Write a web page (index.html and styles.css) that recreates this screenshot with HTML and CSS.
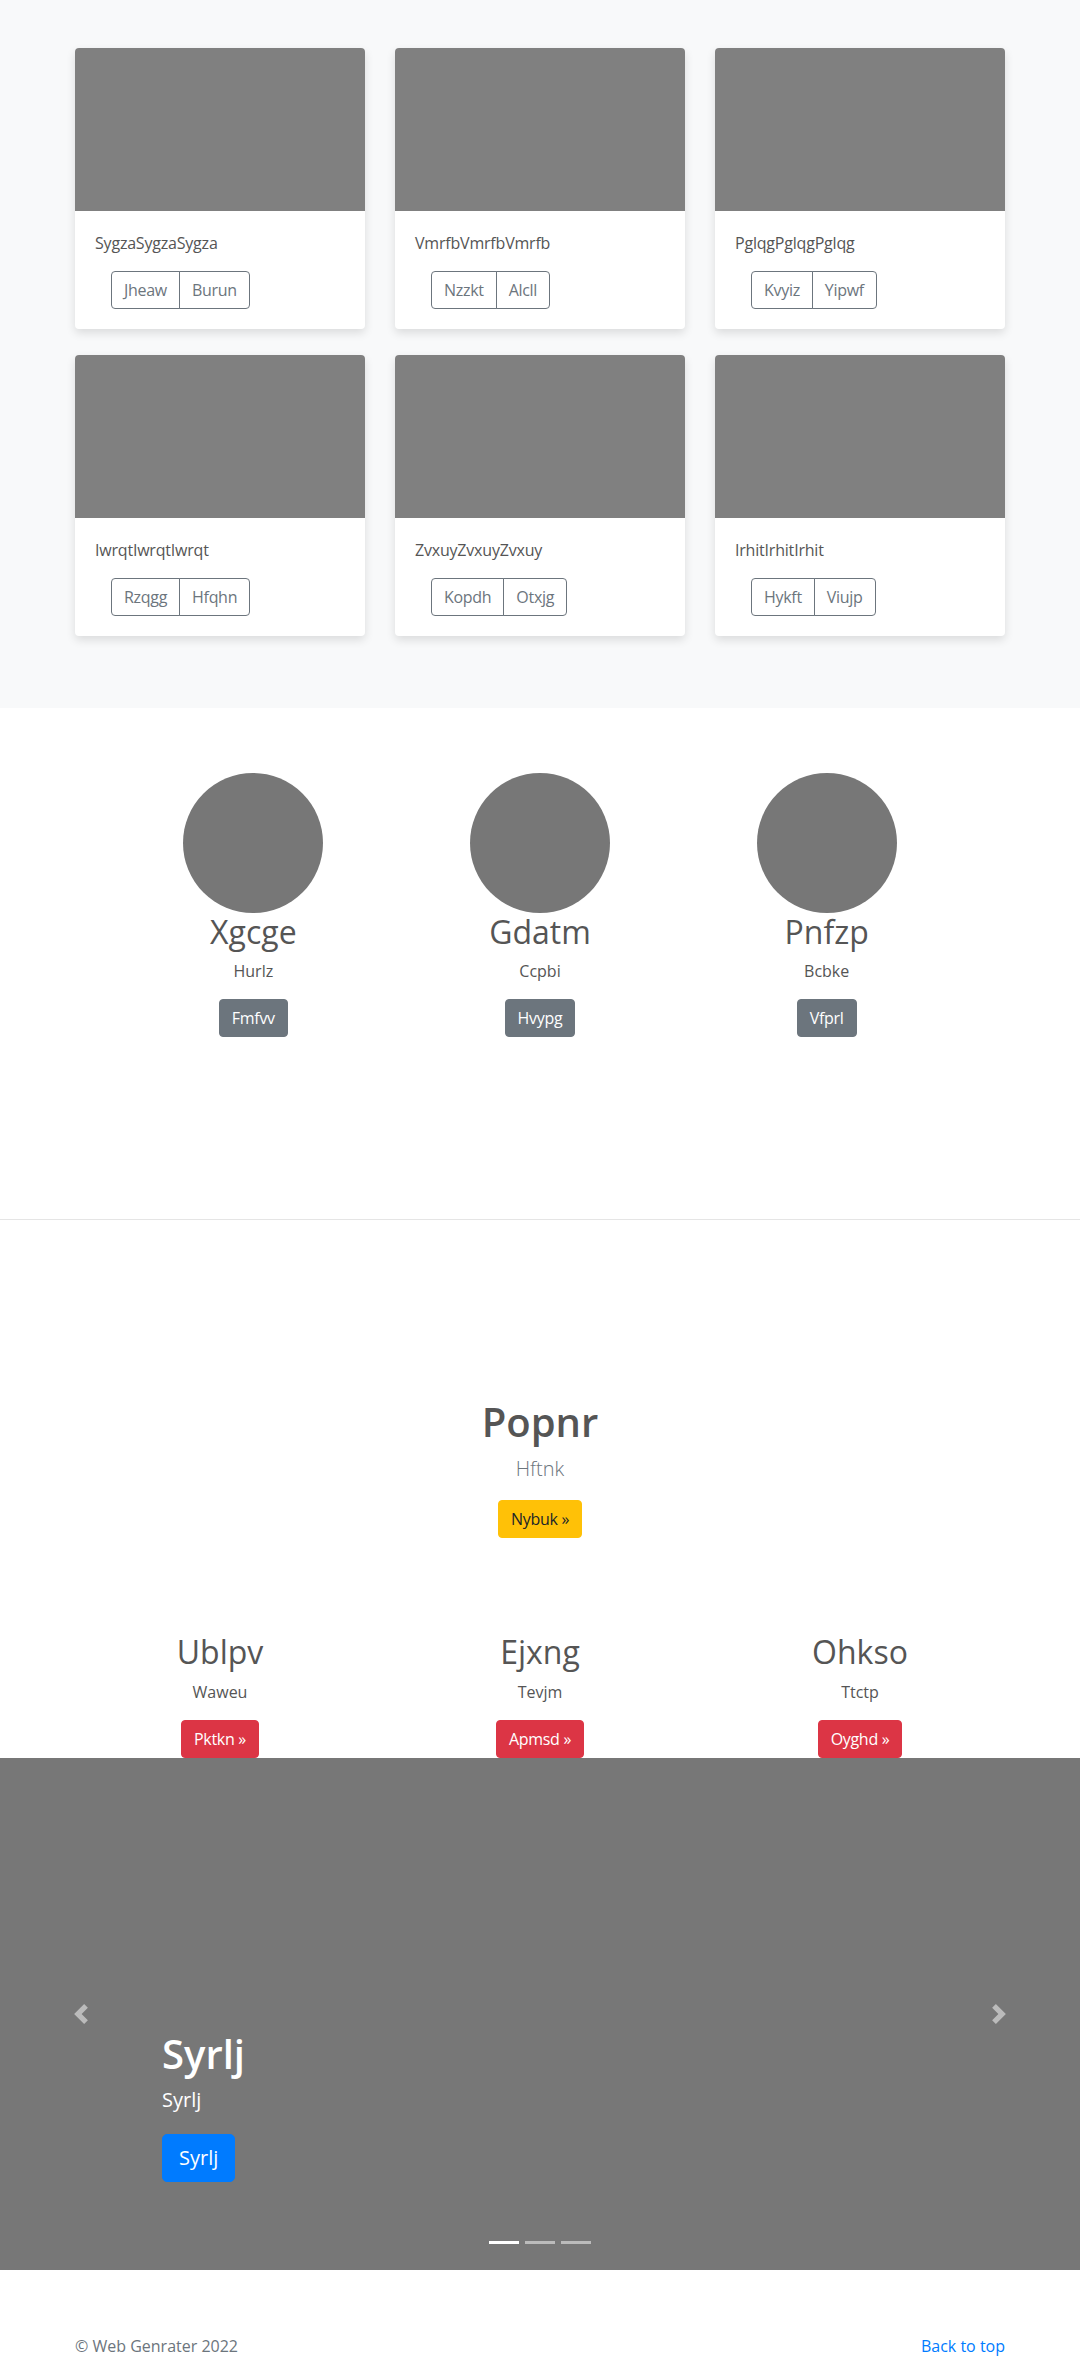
FILE: index.html
```html
<!DOCTYPE html>
<html lang="en">
<head>
<meta charset="utf-8">
<title>Web Genrater</title>
<link rel="stylesheet" href="styles.css">
</head>
<body>
<section class="album">
  <div class="container card-grid">
    <div class="card">
      <div class="card-img"></div>
      <div class="card-body">
        <p class="card-text">SygzaSygzaSygza</p>
        <div class="btn-group"><button class="btn btn-outline">Jheaw</button><button class="btn btn-outline">Burun</button></div>
      </div>
    </div>
    <div class="card">
      <div class="card-img"></div>
      <div class="card-body">
        <p class="card-text">VmrfbVmrfbVmrfb</p>
        <div class="btn-group"><button class="btn btn-outline">Nzzkt</button><button class="btn btn-outline">Alcll</button></div>
      </div>
    </div>
    <div class="card">
      <div class="card-img"></div>
      <div class="card-body">
        <p class="card-text">PglqgPglqgPglqg</p>
        <div class="btn-group"><button class="btn btn-outline">Kvyiz</button><button class="btn btn-outline">Yipwf</button></div>
      </div>
    </div>
    <div class="card">
      <div class="card-img"></div>
      <div class="card-body">
        <p class="card-text">IwrqtIwrqtIwrqt</p>
        <div class="btn-group"><button class="btn btn-outline">Rzqgg</button><button class="btn btn-outline">Hfqhn</button></div>
      </div>
    </div>
    <div class="card">
      <div class="card-img"></div>
      <div class="card-body">
        <p class="card-text">ZvxuyZvxuyZvxuy</p>
        <div class="btn-group"><button class="btn btn-outline">Kopdh</button><button class="btn btn-outline">Otxjg</button></div>
      </div>
    </div>
    <div class="card">
      <div class="card-img"></div>
      <div class="card-body">
        <p class="card-text">IrhitIrhitIrhit</p>
        <div class="btn-group"><button class="btn btn-outline">Hykft</button><button class="btn btn-outline">Viujp</button></div>
      </div>
    </div>
  </div>
</section>

<section class="marketing">
  <div class="marketing-grid">
    <div class="person">
      <div class="avatar"></div>
      <h2 class="person-name">Xgcge</h2>
      <p class="person-role">Hurlz</p>
      <button class="btn btn-secondary">Fmfvv</button>
    </div>
    <div class="person">
      <div class="avatar"></div>
      <h2 class="person-name">Gdatm</h2>
      <p class="person-role">Ccpbi</p>
      <button class="btn btn-secondary">Hvypg</button>
    </div>
    <div class="person">
      <div class="avatar"></div>
      <h2 class="person-name">Pnfzp</h2>
      <p class="person-role">Bcbke</p>
      <button class="btn btn-secondary">Vfprl</button>
    </div>
  </div>
</section>

<hr class="divider">

<section class="hero">
  <h1 class="hero-title">Popnr</h1>
  <p class="hero-lead">Hftnk</p>
  <button class="btn btn-warning">Nybuk »</button>
</section>

<section class="features container">
  <div class="feature">
    <h2 class="feature-title">Ublpv</h2>
    <p class="feature-text">Waweu</p>
    <button class="btn btn-danger">Pktkn »</button>
  </div>
  <div class="feature">
    <h2 class="feature-title">Ejxng</h2>
    <p class="feature-text">Tevjm</p>
    <button class="btn btn-danger">Apmsd »</button>
  </div>
  <div class="feature">
    <h2 class="feature-title">Ohkso</h2>
    <p class="feature-text">Ttctp</p>
    <button class="btn btn-danger">Oyghd »</button>
  </div>
</section>

<section class="carousel">
  <ol class="indicators">
    <li class="indicator active"></li>
    <li class="indicator"></li>
    <li class="indicator"></li>
  </ol>
  <a class="control control-prev" href="#">
    <svg class="control-icon" viewBox="0 0 8 8" width="20" height="20"><path fill="#fff" d="M5.25 0l-4 4 4 4 1.5-1.5L4.25 4l2.5-2.5L5.25 0z"/></svg>
  </a>
  <a class="control control-next" href="#">
    <svg class="control-icon" viewBox="0 0 8 8" width="20" height="20"><path fill="#fff" d="M2.75 0l-1.5 1.5L3.75 4l-2.5 2.5L2.75 8l4-4-4-4z"/></svg>
  </a>
  <div class="caption">
    <h1 class="caption-title">Syrlj</h1>
    <p class="caption-text">Syrlj</p>
    <div class="caption-action"><button class="btn btn-lg btn-primary">Syrlj</button></div>
  </div>
</section>

<footer class="footer container">
  <p class="copyright">© Web Genrater 2022</p>
  <a class="back-top" href="#">Back to top</a>
</footer>
</body>
</html>
```

FILE: styles.css
```css
* { box-sizing: border-box; }

body {
  margin: 0;
  font-family: "Open Sans", "Noto Sans", sans-serif;
  font-size: 16px;
  line-height: 1.5;
  color: #555;
  background: #fff;
}

p { margin: 0; }
h1, h2 { margin: 0; }

.container {
  width: 930px;
  margin: 0 auto;
}

/* Buttons */
.btn {
  display: inline-block;
  font-family: inherit;
  font-size: 16px;
  line-height: 24px;
  letter-spacing: -0.3px;
  padding: 6px 12px;
  border: 1px solid transparent;
  border-radius: 4px;
  background: transparent;
  cursor: pointer;
}
.btn-outline {
  color: #6c757d;
  border-color: #6c757d;
  background: transparent;
}
.btn-secondary { background: #6c757d; border-color: #6c757d; color: #fff; }
.btn-warning { background: #ffc107; border-color: #ffc107; color: #212529; }
.btn-danger { background: #dc3545; border-color: #dc3545; color: #fff; }
.btn-primary { background: #007bff; border-color: #007bff; color: #fff; }
.btn-lg {
  font-size: 20px;
  line-height: 30px;
  padding: 8px 16px;
  border-radius: 5px;
}

/* Album */
.album {
  background: #f8f9fa;
  padding: 48px 0 72px;
}
.card-grid {
  display: grid;
  grid-template-columns: repeat(3, 1fr);
  column-gap: 30px;
  row-gap: 26px;
}
.card {
  background: #fff;
  border-radius: 4px;
  box-shadow: 0 4px 10px rgba(0, 0, 0, 0.12);
  overflow: hidden;
}
.card-img {
  height: 163px;
  background: #808080;
}
.card-body {
  padding: 20px;
}
.card-text {
  margin-bottom: 16px;
  letter-spacing: -0.2px;
}
.btn-group {
  display: inline-flex;
  margin-left: 16px;
}
.btn-group .btn:first-child {
  border-top-right-radius: 0;
  border-bottom-right-radius: 0;
}
.btn-group .btn:last-child {
  border-top-left-radius: 0;
  border-bottom-left-radius: 0;
  margin-left: -1px;
}

/* Marketing */
.marketing {
  padding: 65px 0 182px;
}
.marketing-grid {
  width: 860px;
  margin: 0 auto;
  display: grid;
  grid-template-columns: repeat(3, 1fr);
}
.person {
  text-align: center;
}
.avatar {
  width: 140px;
  height: 140px;
  border-radius: 50%;
  background: #777;
  margin: 0 auto;
}
.person-name {
  font-size: 32px;
  font-weight: 400;
  line-height: 1.2;
  margin-bottom: 8px;
}
.person-role {
  margin-bottom: 16px;
}

.divider {
  margin: 0;
  border: 0;
  border-top: 1px solid rgba(0, 0, 0, 0.1);
}

/* Hero */
.hero {
  text-align: center;
  padding-top: 178px;
}
.hero-title {
  font-size: 40px;
  font-weight: 600;
  line-height: 1.2;
  margin-bottom: 8px;
}
.hero-lead {
  font-size: 20px;
  font-weight: 300;
  line-height: 30px;
  color: #6c757d;
  margin-bottom: 16px;
}

/* Features */
.features {
  display: grid;
  grid-template-columns: repeat(3, 1fr);
  column-gap: 30px;
  padding-top: 95px;
}
.feature {
  text-align: center;
}
.feature-title {
  font-size: 32px;
  font-weight: 500;
  line-height: 1.2;
  margin-bottom: 8px;
}
.feature-text {
  margin-bottom: 16px;
}
.feature .btn { vertical-align: top; }

/* Carousel */
.carousel {
  position: relative;
  height: 512px;
  background: #777;
  overflow: hidden;
}
.indicators {
  position: absolute;
  left: 0;
  right: 0;
  bottom: 0;
  margin: 0 0 16px;
  padding: 0;
  list-style: none;
  display: flex;
  justify-content: center;
  z-index: 2;
}
.indicator {
  width: 30px;
  height: 23px;
  margin: 0 3px;
  border-top: 10px solid transparent;
  border-bottom: 10px solid transparent;
  background: #fff;
  background-clip: padding-box;
  opacity: 0.5;
}
.indicator.active { opacity: 1; }
.control {
  position: absolute;
  top: 0;
  bottom: 0;
  width: 15%;
  display: flex;
  align-items: center;
  justify-content: center;
}
.control-prev { left: 0; }
.control-next { right: 0; }
.control-icon { opacity: 0.5; display: block; }
.caption {
  position: absolute;
  left: 15%;
  right: 15%;
  bottom: 48px;
  padding: 20px 0;
  color: #fff;
  text-align: left;
  z-index: 1;
}
.caption-title {
  font-size: 40px;
  font-weight: 600;
  line-height: 1.2;
  margin-bottom: 8px;
}
.caption-text {
  font-size: 20px;
  line-height: 28px;
  margin-bottom: 20px;
}
.caption-action {
  margin-bottom: 20px;
}
.caption-action .btn { display: block; letter-spacing: 0; }

/* Footer */
.footer {
  display: flex;
  justify-content: space-between;
  padding-top: 64px;
}
.copyright { color: #6c757d; }
.back-top { color: #007bff; text-decoration: none; }
```
